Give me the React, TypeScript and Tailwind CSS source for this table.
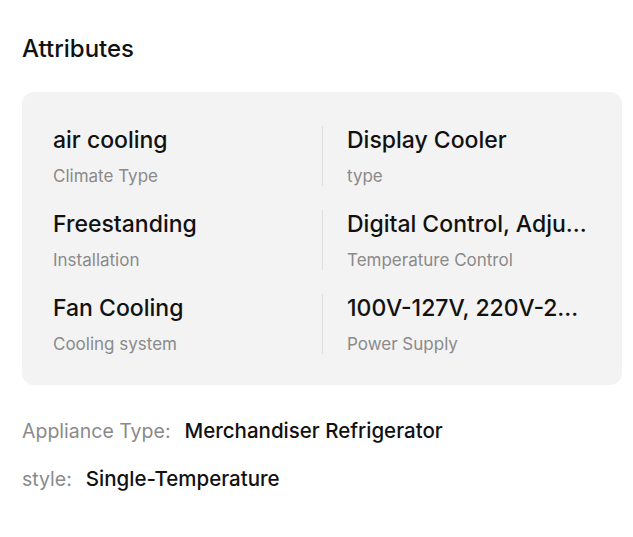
const attributes = [
  { value: "air cooling", label: "Climate Type" },
  { value: "Display Cooler", label: "type" },
  { value: "Freestanding", label: "Installation" },
  { value: "Digital Control, Adjustable Thermostat", label: "Temperature Control" },
  { value: "Fan Cooling", label: "Cooling system" },
  { value: "100V-127V, 220V-240V", label: "Power Supply" },
];

const extras = [
  { label: "Appliance Type:", value: "Merchandiser Refrigerator" },
  { label: "style:", value: "Single-Temperature" },
];

export default function App() {
  return (
    <div className="min-h-screen bg-white pl-[22px] pr-[11px] pt-[35px] font-['Inter',sans-serif] text-[#111]">
      {/* Heading */}
      <h2 className="text-[24px] leading-7 font-medium">Attributes</h2>

      {/* Attribute card */}
      <div className="mt-[29px] rounded-xl bg-[#f3f3f3] px-[31px] pt-[34px] pb-[31px]">
        <div className="grid grid-cols-2 gap-y-6">
          {attributes.map((item, i) => (
            <div
              key={item.label}
              className={`min-w-0 ${i % 2 === 1 ? "border-l border-[#dcdcdc] pl-6" : "pr-6"}`}
            >
              <div className="truncate text-[23px] leading-7 font-medium">{item.value}</div>
              <div className="mt-3 truncate text-[17px] leading-5 text-[#8a8a8a]">{item.label}</div>
            </div>
          ))}
        </div>
      </div>

      {/* Extra attributes */}
      <div className="mt-8 flex flex-col gap-5">
        {extras.map((item) => (
          <div key={item.label} className="flex items-center gap-[14px] leading-7">
            <span className="text-[19.5px] text-[#8a8a8a]">{item.label}</span>
            <span className="text-[20.5px] font-medium">{item.value}</span>
          </div>
        ))}
      </div>
    </div>
  );
}
